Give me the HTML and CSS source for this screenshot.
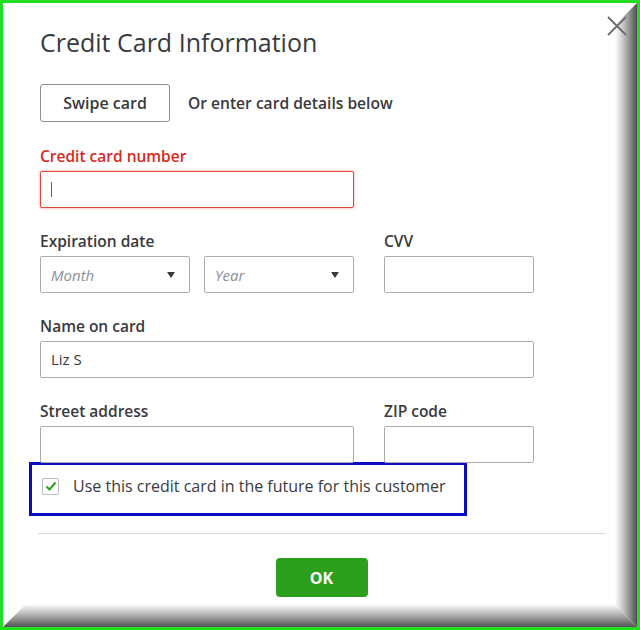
FILE: index.html
```html
<!DOCTYPE html>
<html lang="en">
<head>
    <meta charset="UTF-8">
    <meta name="viewport" content="width=device-width, initial-scale=1.0">
    <title>Credit Card Information</title>
    <link rel="stylesheet" href="styles.css">
</head>
<body>
    <div class="frame">
        <button class="close-btn" aria-label="Close">
            <svg width="22" height="22" viewBox="0 0 22 22"><path d="M2 2 L20 20 M20 2 L2 20" stroke="#6b6c72" stroke-width="1.8" fill="none"/></svg>
        </button>

        <h1 class="dialog-title">Credit Card Information</h1>

        <div class="swipe-row">
            <button class="outline-btn">Swipe card</button>
            <span class="swipe-hint">Or enter card details below</span>
        </div>

        <div class="field field-error">
            <label class="field-label">Credit card number</label>
            <div class="text-box wide has-caret"></div>
        </div>

        <div class="field-row">
            <div class="field">
                <label class="field-label">Expiration date</label>
                <div class="select-pair">
                    <div class="select-box"><span class="placeholder">Month</span><span class="arrow"></span></div>
                    <div class="select-box"><span class="placeholder">Year</span><span class="arrow"></span></div>
                </div>
            </div>
            <div class="field">
                <label class="field-label">CVV</label>
                <div class="text-box small"></div>
            </div>
        </div>

        <div class="field">
            <label class="field-label">Name on card</label>
            <div class="text-box full">Liz S</div>
        </div>

        <div class="field-row">
            <div class="field">
                <label class="field-label">Street address</label>
                <div class="text-box wide"></div>
            </div>
            <div class="field">
                <label class="field-label">ZIP code</label>
                <div class="text-box small"></div>
            </div>
        </div>

        <div class="remember-box">
            <span class="check">
                <svg width="12" height="12" viewBox="0 0 12 12"><path d="M1.5 6.5 L4.5 9.5 L10.5 2.5" stroke="#2ca01c" stroke-width="2" fill="none"/></svg>
            </span>
            <span class="remember-text">Use this credit card in the future for this customer</span>
        </div>

        <hr class="divider">

        <div class="footer">
            <button class="primary-btn">OK</button>
        </div>
    </div>
</body>
</html>
```

FILE: styles.css
```css
* {
    margin: 0;
    padding: 0;
    box-sizing: border-box;
}

body {
    font-family: 'Open Sans', 'Lato', sans-serif;
    color: #393a3d;
    background: #ffffff;
}

.frame {
    position: relative;
    width: 640px;
    height: 630px;
    border: 3px solid #22dd22;
    background: #ffffff;
    padding: 24px 0 0 37px;
    overflow: hidden;
}

/* bevel around the right and bottom edges */
.frame::before,
.frame::after {
    content: "";
    position: absolute;
}

.frame::before {
    top: 0;
    right: 0;
    bottom: 0;
    width: 22px;
    background: linear-gradient(to right, #ffffff 0%, #c8c8c8 35%, #888888 70%, #505050 100%);
    clip-path: polygon(0 22px, 100% 0, 100% 100%, 0 calc(100% - 23px));
}

.frame::after {
    left: 0;
    right: 0;
    bottom: 0;
    height: 23px;
    background: linear-gradient(to bottom, #ffffff 0%, #c6c6c6 35%, #8a8a8a 70%, #525252 100%);
    clip-path: polygon(23px 0, calc(100% - 22px) 0, 100% 100%, 0 100%);
}

.close-btn {
    position: absolute;
    top: 12px;
    right: 9px;
    background: none;
    border: none;
    z-index: 2;
    line-height: 0;
}

.dialog-title {
    font-size: 25px;
    line-height: 30px;
    font-weight: normal;
    color: #393a3d;
    margin-bottom: 27px;
}

.swipe-row {
    display: flex;
    align-items: center;
    gap: 18px;
    margin-bottom: 24px;
}

.outline-btn {
    width: 130px;
    height: 38px;
    background: #ffffff;
    border: 1px solid #8d9096;
    border-radius: 3px;
    font-family: inherit;
    font-size: 16px;
    font-weight: 600;
    color: #393a3d;
}

.swipe-hint {
    font-size: 15.6px;
    font-weight: 600;
    color: #393a3d;
}

.field {
    margin-bottom: 23px;
}

.field-label {
    display: block;
    font-size: 15.5px;
    font-weight: 600;
    line-height: 20px;
    margin-bottom: 5px;
    color: #393a3d;
}

.field-error .field-label {
    color: #d52b1e;
}

.text-box {
    height: 37px;
    border: 1px solid #a9adb3;
    border-radius: 2px;
    background: #ffffff;
    font-size: 15px;
    line-height: 35px;
    padding: 0 10px;
}

.text-box.wide {
    width: 314px;
}

.text-box.small {
    width: 150px;
}

.text-box.full {
    width: 494px;
}

.field-error .text-box {
    border: 1.5px solid #e0483b;
    box-shadow: 0 0 3px rgba(224, 72, 59, 0.55);
}

.has-caret {
    position: relative;
}

.has-caret::before {
    content: "";
    position: absolute;
    left: 10px;
    top: 10px;
    width: 1px;
    height: 15px;
    background: #b4442f;
}

.field-row {
    display: flex;
    gap: 30px;
}

.select-pair {
    display: flex;
    gap: 14px;
}

.select-box {
    width: 150px;
    height: 37px;
    border: 1px solid #a9adb3;
    border-radius: 2px;
    display: flex;
    align-items: center;
    justify-content: space-between;
    padding: 0 14px 0 10px;
}

.placeholder {
    font-size: 15px;
    font-style: italic;
    color: #8d9096;
}

.arrow {
    width: 0;
    height: 0;
    border-left: 4.5px solid transparent;
    border-right: 4.5px solid transparent;
    border-top: 6px solid #393a3d;
}

.remember-box {
    display: flex;
    align-items: center;
    gap: 14px;
    width: 438px;
    height: 54px;
    margin: -24px 0 0 -11px;
    padding: 0 0 6px 10px;
    border: 3px solid #0b0bbf;
}

.check {
    width: 17px;
    height: 17px;
    border: 1px solid #babec5;
    border-radius: 2px;
    display: flex;
    align-items: center;
    justify-content: center;
}

.remember-text {
    font-size: 16px;
    color: #393a3d;
}

.divider {
    width: 567px;
    margin: 17px 0 0 -2px;
    border: none;
    border-top: 1px solid #d4d7dc;
}

.footer {
    width: 567px;
    margin-left: -2px;
    display: flex;
    justify-content: center;
    padding-top: 24px;
}

.primary-btn {
    width: 92px;
    height: 39px;
    background: #2ca01c;
    border: none;
    border-radius: 4px;
    color: #ffffff;
    font-family: inherit;
    font-size: 16px;
    font-weight: bold;
}
```
